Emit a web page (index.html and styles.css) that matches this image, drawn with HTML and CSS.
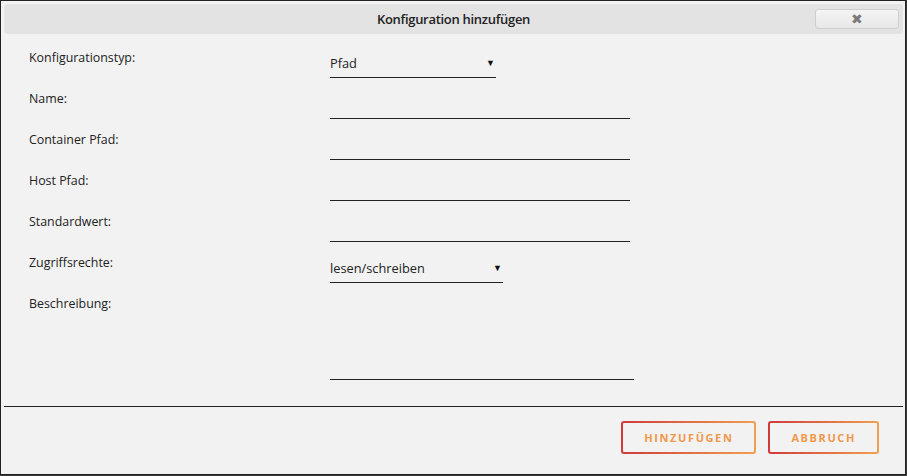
FILE: index.html
```html
<!DOCTYPE html>
<html lang="de">
<head>
    <meta charset="UTF-8">
    <meta name="viewport" content="width=device-width, initial-scale=1.0">
    <title>Konfiguration hinzufügen</title>
    <link rel="stylesheet" href="styles.css">
</head>
<body>
    <div class="dialog">
        <div class="titlebar">
            <span class="title">Konfiguration hinzufügen</span>
            <button class="close-btn" type="button">&#10006;</button>
        </div>
        <form class="config-form">
            <div class="row">
                <label>Konfigurationstyp:</label>
                <div class="select-wrap short">
                    <select><option>Pfad</option></select>
                </div>
            </div>
            <div class="row">
                <label>Name:</label>
                <input type="text" class="text-input">
            </div>
            <div class="row">
                <label>Container Pfad:</label>
                <input type="text" class="text-input">
            </div>
            <div class="row">
                <label>Host Pfad:</label>
                <input type="text" class="text-input">
            </div>
            <div class="row">
                <label>Standardwert:</label>
                <input type="text" class="text-input">
            </div>
            <div class="row">
                <label>Zugriffsrechte:</label>
                <div class="select-wrap medium">
                    <select><option>lesen/schreiben</option></select>
                </div>
            </div>
            <div class="row">
                <label>Beschreibung:</label>
                <textarea class="text-area"></textarea>
            </div>
        </form>
        <div class="separator"></div>
        <div class="footer">
            <button type="button" class="action-btn">HINZUFÜGEN</button>
            <button type="button" class="action-btn">ABBRUCH</button>
        </div>
    </div>
</body>
</html>
```

FILE: styles.css
```css
body {
    margin: 0;
    background: #3a3a3a;
    font-family: 'Open Sans', sans-serif;
}
.dialog {
    width: 904px;
    height: 473px;
    border: 1px solid #222;
    background: #f2f2f2;
    display: flex;
    flex-direction: column;
}
.titlebar {
    position: relative;
    margin: 3px 2px 0 3px;
    height: 30px;
    border-radius: 4px;
    background: #e3e3e3;
    display: flex;
    justify-content: center;
    align-items: center;
}
.title {
    font-size: 13px;
    font-weight: 600;
    color: #222;
    letter-spacing: -0.3px;
}
.close-btn {
    position: absolute;
    right: 4px;
    top: 5px;
    width: 84px;
    height: 20px;
    border: 1px solid #cfcfcf;
    border-radius: 3px;
    background: linear-gradient(#f4f4f4, #e8e8e8);
    color: #7a7a7a;
    font-size: 14px;
    line-height: 18px;
    padding: 0;
}
.config-form {
    flex: 1;
    padding: 14px 0 0 28px;
}
.row {
    display: grid;
    grid-template-columns: 301px auto;
    height: 41px;
}
label {
    font-size: 12.4px;
    line-height: 20px;
    color: #222;
}
.text-input {
    box-sizing: border-box;
    width: 300px;
    height: 30px;
    border: none;
    border-bottom: 1px solid #222;
    background: transparent;
    padding: 0;
}
.select-wrap {
    position: relative;
    box-sizing: border-box;
    height: 30px;
    border-bottom: 1px solid #222;
}
.select-wrap.short { width: 166px; }
.select-wrap.medium { width: 173px; }
.select-wrap::after {
    content: "\25BC";
    position: absolute;
    right: 1px;
    top: 8px;
    font-size: 9px;
    color: #111;
}
select {
    appearance: none;
    border: none;
    background: transparent;
    font-family: 'Open Sans', sans-serif;
    font-size: 12.8px;
    color: #222;
    padding: 6px 0 0 0;
    line-height: 18px;
    width: 100%;
}
.text-area {
    box-sizing: border-box;
    width: 304px;
    height: 86px;
    border: none;
    border-bottom: 1px solid #222;
    background: transparent;
    resize: none;
    padding: 0;
}
.separator {
    height: 1px;
    margin: 0 2px 0 3px;
    background: #222;
}
.footer {
    display: flex;
    justify-content: flex-end;
    gap: 12px;
    padding: 14px 26px 20px 0;
}
.action-btn {
    height: 33px;
    padding: 0 21px 0 21px;
    border: 2px solid transparent;
    border-radius: 3px;
    background: linear-gradient(#f2f2f2, #f2f2f2) padding-box,
                linear-gradient(90deg, #cf3a3a, #f0a050) border-box;
    color: #f0984a;
    font-family: 'Open Sans', sans-serif;
    font-size: 11px;
    font-weight: 700;
    letter-spacing: 1.6px;
}
```
